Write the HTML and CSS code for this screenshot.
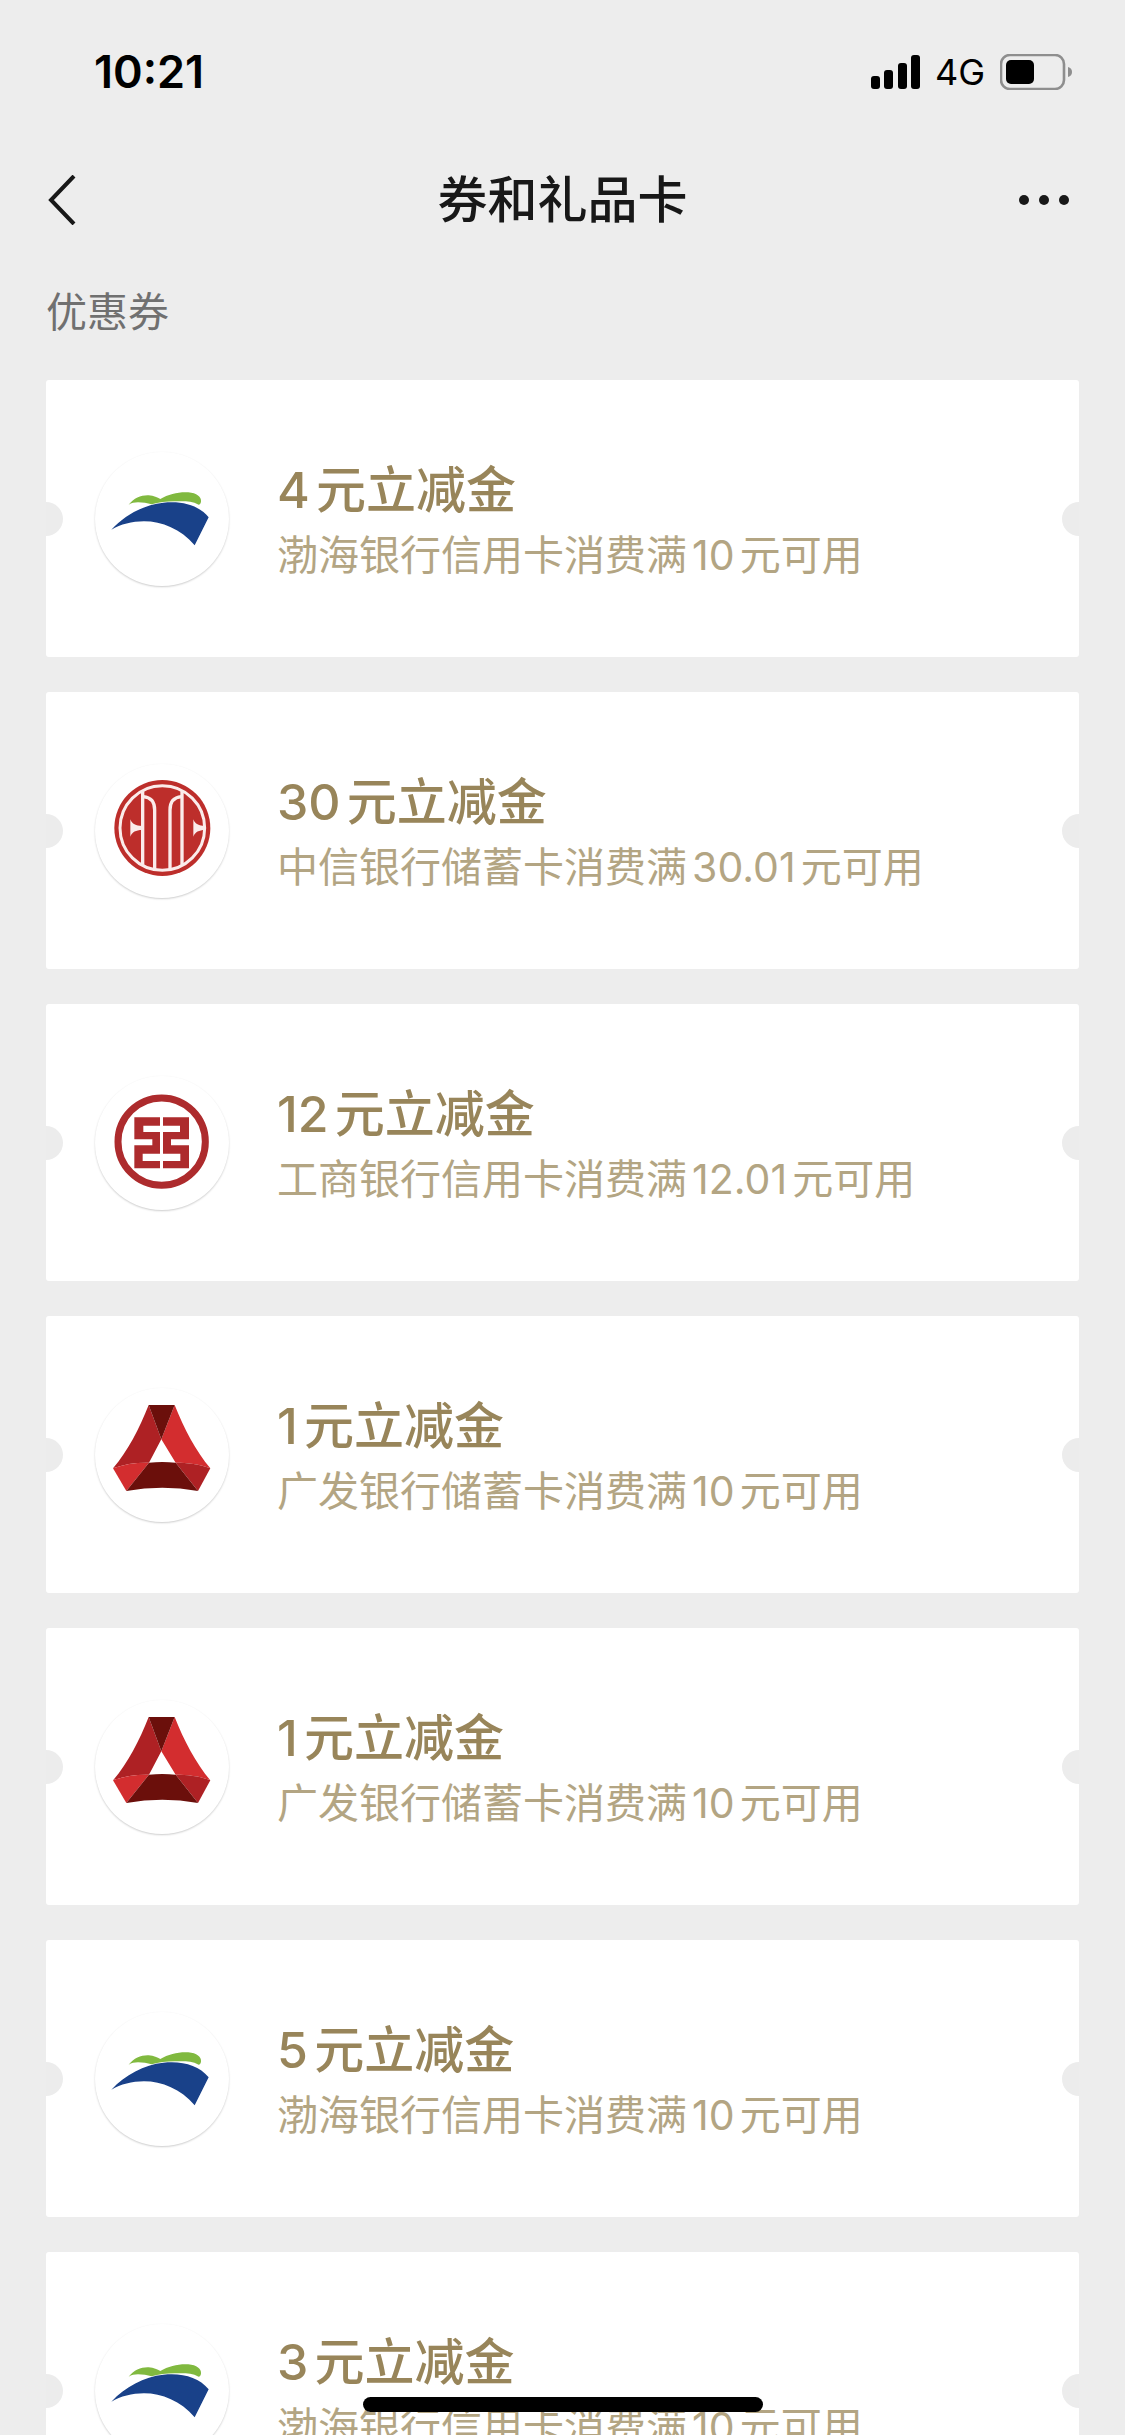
FILE: index.html
```html
<!DOCTYPE html>
<html lang="zh-CN">
<head>
  <meta charset="UTF-8">
  <meta name="viewport" content="width=device-width, initial-scale=1">
  <title>券和礼品卡</title>
  <link rel="stylesheet" href="styles.css">
</head>
<body>

<!-- shared bank logos -->
<svg class="defs" aria-hidden="true">
  <symbol id="logo-bohai" viewBox="45 37 402 402">
    <path fill="#80b93f" d="M146 195C162 175 184 166 206 167C222 168 232 174 241 178C266 163 298 156 325 158C350 160 365 172 363 186C362 191 359 195 356 195C334 183 310 185 285 185C258 185 236 188 215 194C202 190 188 188 174 188C164 188 154 190 146 195Z"/>
    <path fill="#194189" d="M94 270C136 225 192 195 250 189C306 183 356 196 386 233L344 317C302 268 246 245 192 245C156 245 122 254 94 270Z"/>
  </symbol>
  <symbol id="logo-citic" viewBox="45 42 402 402">
    <circle cx="247" cy="234" r="144" fill="#bd2e2b"/>
    <circle cx="247" cy="234" r="127" fill="none" stroke="#fbeceb" stroke-width="9"/>
    <g fill="none" stroke="#fbeceb" stroke-width="10">
      <path d="M188 124V344M306 124V344"/>
      <path d="M190 140C212 142 224 156 224 180V358M304 140C282 142 270 156 270 180V358"/>
    </g>
    <g fill="#fbeceb">
      <path d="M151 208C156 222 168 228 186 228V240C168 240 156 246 151 260Z"/>
      <path d="M340 208C345 222 357 228 375 228V240C357 240 345 246 340 260Z"/>
    </g>
  </symbol>
  <symbol id="logo-icbc" viewBox="45 35 402 402">
    <circle cx="245" cy="232" r="131" fill="none" stroke="#ad2b2d" stroke-width="21"/>
    <g fill="#ad2b2d">
      <path d="M163 159H240V184H190V203H240V312H163V243H217V225H163Z"/>
      <path d="M327 159H249V184H300V203H249V312H327V243H273V225H327Z"/>
    </g>
    <path fill="#fff" d="M188 268H240V290H188ZM249 268H301V290H249Z"/>
  </symbol>
  <symbol id="logo-cgb" viewBox="45 40 402 402">
    <path fill="#ae2124" d="M206 91L244 194L207 264C170 263 132 268 99 281C143 230 178 162 206 91Z"/>
    <path fill="#d32d2f" d="M284 91C312 162 348 230 391 281C360 268 322 264 287 264L244 194Z"/>
    <path fill="#6b0f0b" d="M206 91H284L244 194Z"/>
    <path fill="#d32d2f" d="M99 281C132 268 170 263 207 264L139 349Z"/>
    <path fill="#ae2124" d="M391 281C360 268 322 264 287 264L354 349Z"/>
    <path fill="#6b0f0b" d="M207 264Q247 260 287 264L354 349Q247 329 139 349Z"/>
  </symbol>
</svg>

<header class="top">
  <div class="status-bar">
    <span class="time">10:21</span>
    <div class="status-icons">
      <svg width="49" height="34" viewBox="0 0 49 34" aria-hidden="true">
        <rect x="0" y="21" width="9" height="13" rx="3"/>
        <rect x="13" y="15" width="9" height="19" rx="3"/>
        <rect x="27" y="8" width="9" height="26" rx="3"/>
        <rect x="40" y="0" width="9" height="34" rx="3"/>
      </svg>
      <span class="network">4G</span>
      <svg width="72" height="36" viewBox="0 0 72 36" aria-hidden="true">
        <rect x="1" y="1" width="63" height="34" rx="9" fill="none" stroke="#8e8e8e" stroke-width="2.6"/>
        <rect x="6" y="6" width="28" height="24" rx="5"/>
        <path d="M68 13Q72 14 72 18T68 23Z" fill="#8e8e8e"/>
      </svg>
    </div>
  </div>

  <nav class="nav-bar">
    <button type="button" class="nav-btn" aria-label="返回">
      <svg width="28" height="50" viewBox="0 0 28 50" aria-hidden="true">
        <path d="M26 1L3 25L26 49" fill="none" stroke="#181818" stroke-width="4"/>
      </svg>
    </button>
    <h1>券和礼品卡</h1>
    <button type="button" class="nav-btn" aria-label="更多">
      <svg width="60" height="12" viewBox="0 0 60 12" fill="#181818" aria-hidden="true">
        <circle cx="7" cy="6" r="5"/>
        <circle cx="27" cy="6" r="5"/>
        <circle cx="47" cy="6" r="5"/>
      </svg>
    </button>
  </nav>
</header>

<main class="coupons">
  <h2>优惠券</h2>
  <ul class="coupon-list">
    <li class="coupon">
      <svg class="logo" aria-hidden="true"><use href="#logo-bohai"/></svg>
      <div class="info">
        <h3>4元立减金</h3>
        <p>渤海银行信用卡消费满10元可用</p>
      </div>
    </li>
    <li class="coupon">
      <svg class="logo" aria-hidden="true"><use href="#logo-citic"/></svg>
      <div class="info">
        <h3>30元立减金</h3>
        <p>中信银行储蓄卡消费满30.01元可用</p>
      </div>
    </li>
    <li class="coupon">
      <svg class="logo" aria-hidden="true"><use href="#logo-icbc"/></svg>
      <div class="info">
        <h3>12元立减金</h3>
        <p>工商银行信用卡消费满12.01元可用</p>
      </div>
    </li>
    <li class="coupon">
      <svg class="logo" aria-hidden="true"><use href="#logo-cgb"/></svg>
      <div class="info">
        <h3>1元立减金</h3>
        <p>广发银行储蓄卡消费满10元可用</p>
      </div>
    </li>
    <li class="coupon">
      <svg class="logo" aria-hidden="true"><use href="#logo-cgb"/></svg>
      <div class="info">
        <h3>1元立减金</h3>
        <p>广发银行储蓄卡消费满10元可用</p>
      </div>
    </li>
    <li class="coupon">
      <svg class="logo" aria-hidden="true"><use href="#logo-bohai"/></svg>
      <div class="info">
        <h3>5元立减金</h3>
        <p>渤海银行信用卡消费满10元可用</p>
      </div>
    </li>
    <li class="coupon">
      <svg class="logo" aria-hidden="true"><use href="#logo-bohai"/></svg>
      <div class="info">
        <h3>3元立减金</h3>
        <p>渤海银行信用卡消费满10元可用</p>
      </div>
    </li>
  </ul>
</main>

<div class="home-indicator"></div>

</body>
</html>
```

FILE: styles.css
```css
* { box-sizing: border-box; }
body {
  font-family: Inter, "Noto Sans CJK SC", sans-serif;
  background: #ededed; color: #181818;
  margin: 0; height: 100vh;
  display: flex; flex-direction: column; overflow: hidden;
}
h1, h2, h3, p, ul { margin: 0; padding: 0; }
.defs { position: absolute; width: 0; height: 0; }

/* status bar + nav */
.top { flex: none; }
.status-bar {
  display: flex; justify-content: space-between; align-items: center;
  height: 143px; padding: 0 53px 0 94px; color: #000;
}
.status-bar svg, .nav-btn svg { display: block; }
.time { font-size: 45px; font-weight: 600; }
.status-icons { display: flex; align-items: center; gap: 15px; }
.network { font-size: 36px; }
.nav-bar {
  display: flex; justify-content: space-between; align-items: center;
  height: 113px; padding: 0 48px;
}
.nav-btn {
  display: flex; align-items: center; width: 60px; height: 60px;
  border: none; padding: 0; background: none; cursor: pointer;
}
h1 { font-size: 50px; font-weight: 500; line-height: 60px; }

/* coupons */
.coupons {
  flex: 1; min-height: 0; overflow-y: auto; scrollbar-width: none;
  padding: 26px 46px;
}
h2 {
  font-size: 41px; font-weight: 400; line-height: 60px;
  color: #707070; margin-bottom: 38px;
}
.coupon-list { list-style: none; display: grid; gap: 35px; }
.coupon {
  position: relative; display: flex; align-items: center; gap: 48px;
  height: 277px; padding: 0 49px; background: #fff; border-radius: 3px;
}
.coupon::before, .coupon::after {
  content: ""; position: absolute; top: 50%; margin-top: -17px;
  width: 17px; height: 34px; background: #ececec;
}
.coupon::before { left: 0; border-radius: 0 17px 17px 0; }
.coupon::after { right: 0; border-radius: 17px 0 0 17px; }
.logo {
  flex: none; width: 134px; height: 134px; border-radius: 50%;
  box-shadow: 0 1px 2px rgba(0,0,0,0.2);
}
.info { padding-top: 6px; color: #98855a; text-autospace: normal; }
h3 { font-size: 50px; font-weight: 500; line-height: 66px; }
p { font-size: 41px; font-weight: 400; line-height: 64px; color: #b3a583; }

.home-indicator {
  position: fixed; left: 50%; bottom: 23px; transform: translateX(-50%);
  width: 400px; height: 15px; border-radius: 8px; background: #000;
}
```
